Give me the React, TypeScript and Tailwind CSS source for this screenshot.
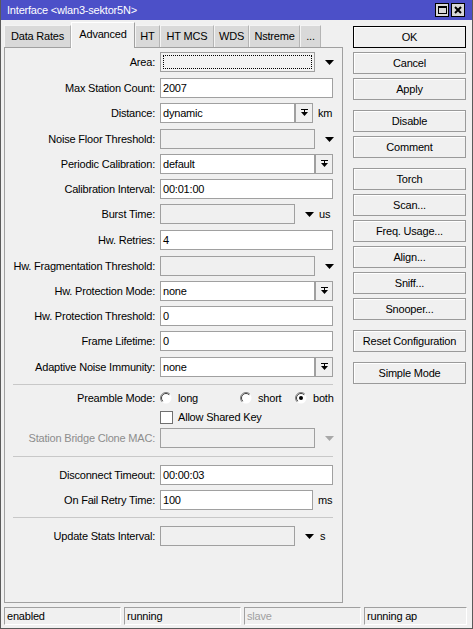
import React from 'react';

type RowProps = {
  label: string;
  mt: string;
  h?: string;
  dim?: boolean;
  children?: React.ReactNode;
};

const Row: React.FC<RowProps> = ({ label, mt, h = 'h-[20px]', dim, children }) => (
  <div className={`flex items-center ${h} ${mt}`}>
    <div className={`w-[150px] shrink-0 text-right whitespace-nowrap ${dim ? 'text-[#8d8d8d]' : 'text-black'}`}>
      {label}
    </div>
    <div className="ml-[5px] flex items-center">{children}</div>
  </div>
);

// plain edit box, white when it has a value, grey when it's disabled/empty
const Box: React.FC<{ w: string; value?: string; off?: boolean }> = ({ w, value, off }) => (
  <div
    className={`${w} h-[20px] border border-[#a0a0a0] flex items-center pl-[2px] whitespace-nowrap ${off ? 'bg-[#f0f0f0]' : 'bg-white'}`}
  >
    {value}
  </div>
);

const Arrow: React.FC<{ gray?: boolean }> = ({ gray }) => (
  <svg width="9" height="5" viewBox="0 0 9 5" className="ml-[10px]">
    <path d="M0 0h9L4.5 5z" fill={gray ? '#a8a8a8' : '#000'} />
  </svg>
);

const DropBtn = () => (
  <div className="w-[18px] h-[20px] border border-[#a0a0a0] bg-[#f0f0f0] flex items-center justify-center">
    <svg width="7" height="8" viewBox="0 0 7 8">
      <path d="M0 0h7v1H0z M3 1h1v2H3z M0 3h7L3.5 7z" fill="#000" />
    </svg>
  </div>
);

const Radio: React.FC<{ on?: boolean }> = ({ on }) => (
  <svg width="12" height="12" viewBox="0 0 12 12" className="shrink-0">
    <circle cx="6" cy="6" r="5.5" fill="#fff" />
    <path d="M2.1 9.9 A5.5 5.5 0 0 1 9.9 2.1" stroke="#808080" fill="none" />
    <path d="M2.8 9.2 A4.5 4.5 0 0 1 9.2 2.8" stroke="#404040" fill="none" />
    {on && <circle cx="6" cy="6" r="2" fill="#000" />}
  </svg>
);

const Sep: React.FC<{ mt: string }> = ({ mt }) => (
  <div className={`ml-[8px] w-[320px] h-px bg-[#c8c8c8] ${mt}`} />
);

const Btn: React.FC<{ label: string; mt: string; def?: boolean }> = ({ label, mt, def }) => (
  <div
    className={`h-[22px] w-[113px] flex items-center justify-center bg-[#f0f0f0] border shadow-[inset_1px_1px_0_#ffffff] ${def ? 'border-black' : 'border-[#9a9a9a]'} ${mt}`}
  >
    {label}
  </div>
);

const tabs = [
  { name: 'Data Rates', w: 'w-[67px]' },
  { name: 'Advanced', w: 'w-[64px]', sel: true },
  { name: 'HT', w: 'w-[25px]' },
  { name: 'HT MCS', w: 'w-[54px]' },
  { name: 'WDS', w: 'w-[35px]' },
  { name: 'Nstreme', w: 'w-[51px]' },
  { name: '...', w: 'w-[21px]' },
];

export default function App() {
  return (
    <div className="w-[473px] h-[629px] bg-[#f0f0f0] border-x border-b border-[#5a5a5a] flex flex-col font-['Liberation_Sans',Arial,sans-serif] text-[11px] tracking-[-0.2px] text-black overflow-hidden">
      {/* title bar */}
      <div className="h-[20px] shrink-0 bg-[#4c50c8] flex items-center pl-[6px] pr-[7px] text-white">
        <span>Interface &lt;wlan3-sektor5N&gt;</span>
        <div className="ml-auto flex gap-[2px]">
          <div className="w-[14px] h-[14px] bg-[#d8d8d8] border border-black flex items-center justify-center">
            <div className="w-[9px] h-[8px] border border-black border-t-2" />
          </div>
          <div className="w-[14px] h-[14px] bg-[#d8d8d8] border border-black flex items-center justify-center">
            <svg width="8" height="8" viewBox="0 0 8 8">
              <path d="M1 1L7 7M7 1L1 7" stroke="#000" strokeWidth="2" />
            </svg>
          </div>
        </div>
      </div>

      <div className="flex flex-1 min-h-0">
        {/* left: tabs + page */}
        <div className="ml-[3px] w-[339px] flex flex-col">
          <div className="h-[27px] flex items-end">
            {tabs.map(t => (
              <div
                key={t.name}
                className={`${t.w} flex items-center justify-center border-t border-l border-r ${
                  t.sel
                    ? 'h-[26px] bg-[#f0f0f0] border-t-white border-l-white border-r-[#a0a0a0] -mb-px relative z-10 pb-[3px]'
                    : 'h-[22px] bg-[#d9d9d9] border-t-[#f4f4f4] border-l-[#f4f4f4] border-r-[#b4b4b4]'
                }`}
              >
                {t.name}
              </div>
            ))}
          </div>

          <div className="flex-1 border border-[#a0a0a0] pt-[4px] flex flex-col">
            <Row label="Area:" mt="mt-0">
              <div className="w-[155px] h-[20px] border border-[#a0a0a0] bg-[#f2f2f2] p-[2px]">
                <div className="w-full h-full border border-dotted border-black" />
              </div>
              <Arrow />
            </Row>
            <Row label="Max Station Count:" mt="mt-[6px]">
              <Box w="w-[173px]" value="2007" />
            </Row>
            <Row label="Distance:" mt="mt-[5px]">
              <Box w="w-[135px]" value="dynamic" />
              <DropBtn />
              <span className="ml-[5px]">km</span>
            </Row>
            <Row label="Noise Floor Threshold:" mt="mt-[6px]">
              <Box w="w-[155px]" off />
              <Arrow />
            </Row>
            <Row label="Periodic Calibration:" mt="mt-[5px]">
              <Box w="w-[155px]" value="default" />
              <DropBtn />
            </Row>
            <Row label="Calibration Interval:" mt="mt-[5px]">
              <Box w="w-[173px]" value="00:01:00" />
            </Row>
            <Row label="Burst Time:" mt="mt-[5px]">
              <Box w="w-[135px]" off />
              <Arrow />
              <span className="ml-[5px]">us</span>
            </Row>
            <Row label="Hw. Retries:" mt="mt-[6px]">
              <Box w="w-[173px]" value="4" />
            </Row>
            <Row label="Hw. Fragmentation Threshold:" mt="mt-[6px]">
              <Box w="w-[155px]" off />
              <Arrow />
            </Row>
            <Row label="Hw. Protection Mode:" mt="mt-[5px]">
              <Box w="w-[155px]" value="none" />
              <DropBtn />
            </Row>
            <Row label="Hw. Protection Threshold:" mt="mt-[5px]">
              <Box w="w-[173px]" value="0" />
            </Row>
            <Row label="Frame Lifetime:" mt="mt-[5px]">
              <Box w="w-[173px]" value="0" />
            </Row>
            <Row label="Adaptive Noise Immunity:" mt="mt-[6px]">
              <Box w="w-[155px]" value="none" />
              <DropBtn />
            </Row>

            <Sep mt="mt-[7px]" />

            <Row label="Preamble Mode:" mt="mt-[4px]" h="h-[18px]">
              <div className="w-[80px] flex items-center">
                <Radio />
                <span className="ml-[6px]">long</span>
              </div>
              <div className="w-[55px] flex items-center">
                <Radio />
                <span className="ml-[6px]">short</span>
              </div>
              <div className="flex items-center">
                <Radio on />
                <span className="ml-[6px]">both</span>
              </div>
            </Row>
            <Row label="" mt="mt-[1px]" h="h-[18px]">
              <div className="w-[13px] h-[13px] bg-white border border-[#707070]" />
              <span className="ml-[5px]">Allow Shared Key</span>
            </Row>
            <Row label="Station Bridge Clone MAC:" mt="mt-[2px]" dim>
              <Box w="w-[155px]" off />
              <Arrow gray />
            </Row>

            <Sep mt="mt-[8px]" />

            <Row label="Disconnect Timeout:" mt="mt-[8px]">
              <Box w="w-[173px]" value="00:00:03" />
            </Row>
            <Row label="On Fail Retry Time:" mt="mt-[5px]">
              <Box w="w-[153px]" value="100" />
              <span className="ml-[5px]">ms</span>
            </Row>

            <Sep mt="mt-[7px]" />

            <Row label="Update Stats Interval:" mt="mt-[8px]">
              <Box w="w-[135px]" off />
              <Arrow />
              <span className="ml-[6px]">s</span>
            </Row>
          </div>
        </div>

        {/* right: buttons */}
        <div className="ml-[10px] pt-[6px] flex flex-col">
          <Btn label="OK" mt="mt-0" def />
          <Btn label="Cancel" mt="mt-[4px]" />
          <Btn label="Apply" mt="mt-[4px]" />
          <Btn label="Disable" mt="mt-[10px]" />
          <Btn label="Comment" mt="mt-[4px]" />
          <Btn label="Torch" mt="mt-[10px]" />
          <Btn label="Scan..." mt="mt-[4px]" />
          <Btn label="Freq. Usage..." mt="mt-[4px]" />
          <Btn label="Align..." mt="mt-[4px]" />
          <Btn label="Sniff..." mt="mt-[4px]" />
          <Btn label="Snooper..." mt="mt-[4px]" />
          <Btn label="Reset Configuration" mt="mt-[10px]" />
          <Btn label="Simple Mode" mt="mt-[10px]" />
        </div>
      </div>

      {/* status bar */}
      <div className="h-[25px] shrink-0 pt-[4px] pb-[3px] pl-[3px] flex gap-[3px]">
        {[
          { t: 'enabled', w: 'w-[117px]' },
          { t: 'running', w: 'w-[117px]' },
          { t: 'slave', w: 'w-[117px]', dim: true },
          { t: 'running ap', w: 'w-[103px]' },
        ].map(s => (
          <div
            key={s.t}
            className={`${s.w} h-[18px] border border-[#a0a0a0] border-b-white border-r-white flex items-center pl-[2px] ${s.dim ? 'text-[#a0a0a0]' : ''}`}
          >
            {s.t}
          </div>
        ))}
      </div>
    </div>
  );
}
